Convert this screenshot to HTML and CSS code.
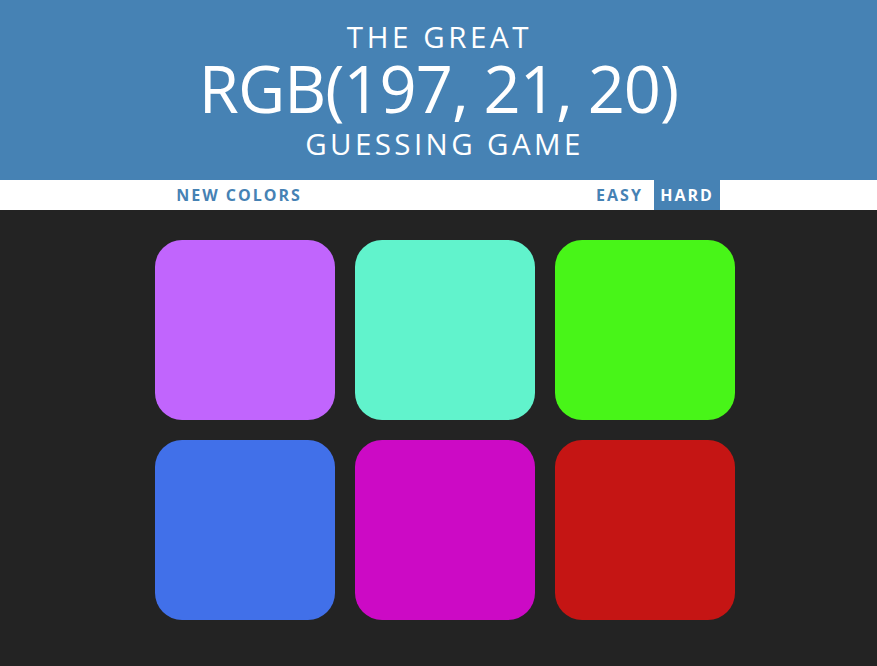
FILE: index.html
```html
<!DOCTYPE html>
<html lang="en">
<head>
<meta charset="utf-8">
<title>Color Game</title>
<link rel="stylesheet" href="styles.css">
</head>
<body>
<h1 class="title">
  <span class="title-line">The Great</span>
  <span class="title-rgb">RGB(197, 21, 20)</span>
  <span class="title-line title-last">Guessing Game</span>
</h1>
<div class="stripe">
  <button class="btn btn-new">New Colors</button>
  <span class="message"></span>
  <button class="btn btn-easy">Easy</button>
  <button class="btn btn-hard selected">Hard</button>
</div>
<main class="board">
  <div class="grid">
    <div class="square sq-purple"></div>
    <div class="square sq-teal"></div>
    <div class="square sq-green"></div>
    <div class="square sq-blue"></div>
    <div class="square sq-magenta"></div>
    <div class="square sq-red"></div>
  </div>
</main>
</body>
</html>
```
FILE: styles.css
```css
html, body {
  margin: 0;
  padding: 0;
}
body {
  background: #232323;
  font-family: "Open Sans", "Liberation Sans", sans-serif;
  height: 666px;
  overflow: hidden;
}
.title {
  margin: 0;
  box-sizing: border-box;
  height: 180px;
  padding-top: 19px;
  background: #4682b4;
  color: #fff;
  text-align: center;
  font-weight: 400;
  text-transform: uppercase;
}
.title-line {
  display: block;
  font-size: 29.5px;
  line-height: 36px;
  letter-spacing: 3.6px;
  padding-left: 2px;
}
.title-last {
  line-height: 46px;
  letter-spacing: 3.4px;
  padding-left: 12px;
}
.title-rgb {
  display: block;
  font-size: 65px;
  line-height: 66px;
  letter-spacing: -1px;
}
.stripe {
  height: 30px;
  background: #fff;
  display: flex;
  justify-content: center;
  align-items: stretch;
  padding-left: 13px;
}
.btn {
  border: none;
  background: none;
  margin: 0;
  padding: 0;
  font-family: "Open Sans", "Liberation Sans", sans-serif;
  font-size: 16px;
  font-weight: 700;
  line-height: 30px;
  letter-spacing: 2px;
  text-transform: uppercase;
  white-space: nowrap;
  color: #4682b4;
  text-align: center;
}
.btn-new { width: 138px; }
.message { width: 282px; }
.btn-easy { width: 59px; }
.btn-hard { width: 66px; margin-left: 5px; }
.selected {
  background: #4682b4;
  color: #fff;
}
.board {
  display: flex;
  justify-content: center;
  padding: 30px 0 0 13px;
}
.grid {
  display: grid;
  grid-template-columns: repeat(3, 180px);
  grid-auto-rows: 180px;
  gap: 20px;
}
.square {
  border-radius: 15%;
}
.sq-purple { background: rgb(193, 101, 253); }
.sq-teal { background: rgb(97, 243, 204); }
.sq-green { background: rgb(72, 245, 24); }
.sq-blue { background: rgb(65, 112, 233); }
.sq-magenta { background: rgb(204, 10, 197); }
.sq-red { background: rgb(197, 21, 20); }
```
